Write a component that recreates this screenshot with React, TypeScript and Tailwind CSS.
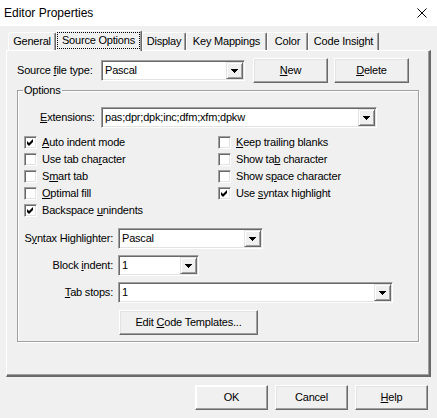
import type { ReactNode } from 'react';

function Arrow() {
  return (
    <svg width="7" height="4" viewBox="0 0 7 4" shapeRendering="crispEdges">
      <path d="M0 0h7v1h-1v1h-1v1h-1v1h-1v-1h-1v-1h-1v-1h-1z" fill="#000" />
    </svg>
  );
}

function Combo({ className, value }: { className: string; value: string }) {
  return (
    <div
      className={`flex h-[21px] items-center border border-t-[#a0a0a0] border-l-[#a0a0a0] border-b-white border-r-white bg-white shadow-[inset_1px_1px_0_#696969,inset_-1px_-1px_0_#e3e3e3] ${className}`}>
      <span className="flex-1 truncate pl-[3px]">{value}</span>
      <div className="mr-[1px] flex h-[17px] w-[17px] items-center justify-center border border-t-[#e3e3e3] border-l-[#e3e3e3] border-b-[#696969] border-r-[#696969] bg-[#f0f0f0] shadow-[inset_1px_1px_0_#fff,inset_-1px_-1px_0_#a0a0a0]">
        <Arrow />
      </div>
    </div>
  );
}

function Btn({ children, className = '' }: { children: ReactNode; className?: string }) {
  return (
    <div
      className={`flex h-[25px] items-center justify-center border border-t-white border-l-white border-b-[#696969] border-r-[#696969] bg-[#f0f0f0] shadow-[inset_-1px_-1px_0_#a0a0a0,inset_1px_1px_0_#e3e3e3] ${className}`}>
      <span>{children}</span>
    </div>
  );
}

function Check({ on, children }: { on?: boolean; children: ReactNode }) {
  return (
    <div className="flex h-[17px] items-center gap-[5px]">
      <div className="flex h-[13px] w-[13px] items-center justify-center border border-t-[#a0a0a0] border-l-[#a0a0a0] border-b-white border-r-white bg-white shadow-[inset_1px_1px_0_#696969,inset_-1px_-1px_0_#e3e3e3]">
        {on && (
          <svg width="11" height="11" viewBox="0 0 11 11">
            <polygon points="2,4 4,6 8,2 8,5 4,9 2,7" fill="#000" />
          </svg>
        )}
      </div>
      <span>{children}</span>
    </div>
  );
}

const U = ({ children }: { children: ReactNode }) => <span className="underline underline-offset-[1px]">{children}</span>;

const tabs = [
  { label: 'General', w: 'w-[48px]' },
  { label: 'Source Options', w: 'w-[86px]', on: true },
  { label: 'Display', w: 'w-[44px]' },
  { label: 'Key Mappings', w: 'w-[81px]' },
  { label: 'Color', w: 'w-[41px]' },
  { label: 'Code Insight', w: 'w-[71px]' },
];

export default function App() {
  return (
    <div className="flex h-[418px] w-[437px] flex-col bg-[#f0f0f0] font-['Liberation_Sans',Arial,sans-serif] text-[11px] tracking-[-0.2px] text-black">
      {/* title bar */}
      <div className="flex h-[26px] items-center justify-between bg-white pl-[4px] pr-[10px] text-[12px] tracking-normal">
        <span>Editor Properties</span>
        <svg width="10" height="10" viewBox="0 0 10 10">
          <path d="M0.5 0.5L9.5 9.5M9.5 0.5L0.5 9.5" stroke="#000" strokeWidth="1" />
        </svg>
      </div>

      {/* tabs */}
      <div className="mt-[4px] flex h-[20px] items-start pl-[8px]">
        {tabs.map((t) =>
          t.on ? (
            <div
              key={t.label}
              className={`relative z-10 h-[21px] rounded-t-[2px] border-l border-t border-r border-l-white border-t-white border-r-[#696969] bg-[#f0f0f0] shadow-[inset_-1px_0_0_#a0a0a0] ${t.w}`}>
              <div className="mt-[1px] mr-[1px] flex h-[17px] items-center justify-center border border-dotted border-black">
                {t.label}
              </div>
            </div>
          ) : (
            <div
              key={t.label}
              className={`mt-[2px] flex h-[18px] items-center justify-center rounded-t-[2px] border-l border-t border-r border-l-white border-t-white border-r-[#696969] shadow-[inset_-1px_0_0_#a0a0a0] ${t.w}`}>
              {t.label}
            </div>
          ),
        )}
      </div>

      {/* page */}
      <div className="ml-[6px] flex h-[327px] w-[425px] flex-col border-t border-l border-r-2 border-b-2 border-t-white border-l-white border-r-[#696969] border-b-[#696969] shadow-[inset_-1px_-1px_0_#a0a0a0]">
        <div className="mt-[7px] flex h-[25px] items-center pl-[10px]">
          <span className="w-[84px]">
            Source <U>f</U>ile type:
          </span>
          <Combo className="w-[144px]" value="Pascal" />
          <Btn className="ml-[8px] w-[75px]">
            <U>N</U>ew
          </Btn>
          <Btn className="ml-[6px] w-[75px]">
            <U>D</U>elete
          </Btn>
        </div>

        {/* options group */}
        <div className="relative mt-[7px] ml-[10px] flex h-[252px] w-[402px] flex-col border border-[#a0a0a0] shadow-[inset_1px_1px_0_#fff,1px_1px_0_#fff]">
          <span className="absolute -top-[8px] left-[5px] bg-[#f0f0f0] px-[1px] leading-[14px]">Options</span>

          <div className="mt-[16px] flex items-center pl-[22px]">
            <span className="w-[61px]">
              <U>E</U>xtensions:
            </span>
            <Combo className="w-[276px]" value="pas;dpr;dpk;inc;dfm;xfm;dpkw" />
          </div>

          <div className="mt-[6px] flex pl-[6px]">
            <div className="flex w-[194px] flex-col">
              <Check on>
                <U>A</U>uto indent mode
              </Check>
              <Check>
                Use tab cha<U>r</U>acter
              </Check>
              <Check>
                S<U>m</U>art tab
              </Check>
              <Check>
                <U>O</U>ptimal fill
              </Check>
              <Check on>
                Backspace <U>u</U>nindents
              </Check>
            </div>
            <div className="flex flex-col">
              <Check>
                <U>K</U>eep trailing blanks
              </Check>
              <Check>
                Show ta<U>b</U> character
              </Check>
              <Check>
                Show s<U>p</U>ace character
              </Check>
              <Check on>
                Use <U>s</U>yntax highlight
              </Check>
            </div>
          </div>

          <div className="mt-[9px] flex items-center">
            <span className="w-[95px] text-right">
              S<U>y</U>ntax Highlighter:
            </span>
            <Combo className="ml-[5px] w-[145px]" value="Pascal" />
          </div>
          <div className="mt-[6px] flex items-center">
            <span className="w-[95px] text-right">
              Block <U>i</U>ndent:
            </span>
            <Combo className="ml-[5px] w-[81px]" value="1" />
          </div>
          <div className="mt-[6px] flex items-center">
            <span className="w-[95px] text-right">
              <U>T</U>ab stops:
            </span>
            <Combo className="ml-[5px] w-[275px]" value="1" />
          </div>
          <div className="mt-[7px] flex pl-[101px]">
            <Btn className="w-[139px]">
              Edit <U>C</U>ode Templates...
            </Btn>
          </div>
        </div>
      </div>

      {/* dialog buttons */}
      <div className="mt-[8px] flex justify-end gap-[7px] pr-[9px]">
        <Btn className="w-[73px] border-t-[#696969] border-l-[#696969] shadow-[inset_-1px_-1px_0_#a0a0a0,inset_1px_1px_0_#fff]">OK</Btn>
        <Btn className="w-[73px]">Cancel</Btn>
        <Btn className="w-[73px]">
          <U>H</U>elp
        </Btn>
      </div>
    </div>
  );
}
